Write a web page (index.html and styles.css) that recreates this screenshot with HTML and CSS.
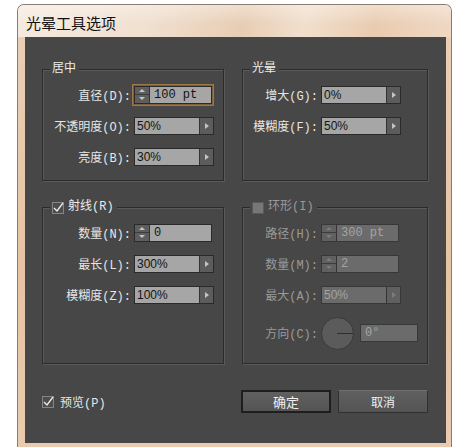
FILE: index.html
```html
<!DOCTYPE html>
<html>
  <head>
    <link rel="stylesheet" href="styles.css">
  </head>
  <body>
    <div class="window">
      <div class="titlebar">光晕工具选项</div>
      <div class="content">
        <div class="groups">
          <!-- 居中 -->
          <div class="group short">
            <div class="legend">居中</div>
            <div class="row">
              <span class="label">直径(D):</span>
              <div class="spinner focus">
                <span class="spin"><i class="up"></i><i class="down"></i></span>
                <span class="value mono">100 pt</span>
              </div>
            </div>
            <div class="row">
              <span class="label">不透明度(O):</span>
              <div class="field">
                <span class="value">50%</span>
                <span class="arrow"></span>
              </div>
            </div>
            <div class="row">
              <span class="label">亮度(B):</span>
              <div class="field">
                <span class="value">30%</span>
                <span class="arrow"></span>
              </div>
            </div>
          </div>

          <!-- 光晕 -->
          <div class="group short narrow">
            <div class="legend">光晕</div>
            <div class="row">
              <span class="label">增大(G):</span>
              <div class="field">
                <span class="value">0%</span>
                <span class="arrow"></span>
              </div>
            </div>
            <div class="row">
              <span class="label">模糊度(F):</span>
              <div class="field">
                <span class="value">50%</span>
                <span class="arrow"></span>
              </div>
            </div>
          </div>

          <!-- 射线 -->
          <div class="group tall">
            <div class="legend">
              <svg class="check" width="12" height="12" viewBox="0 0 12 12">
                <rect x="0.5" y="0.5" width="11" height="11" fill="#4d4d4d" stroke="#858585"/>
                <path d="M2 6 L5 9 L11 1" fill="none" stroke="#e8e8e8" stroke-width="1.4"/>
              </svg>
              射线(R)
            </div>
            <div class="row">
              <span class="label">数量(N):</span>
              <div class="spinner">
                <span class="spin"><i class="up"></i><i class="down"></i></span>
                <span class="value mono">0</span>
              </div>
            </div>
            <div class="row">
              <span class="label">最长(L):</span>
              <div class="field">
                <span class="value">300%</span>
                <span class="arrow"></span>
              </div>
            </div>
            <div class="row">
              <span class="label">模糊度(Z):</span>
              <div class="field">
                <span class="value">100%</span>
                <span class="arrow"></span>
              </div>
            </div>
          </div>

          <!-- 环形 (disabled) -->
          <div class="group tall narrow disabled">
            <div class="legend">
              <svg class="check" width="12" height="12" viewBox="0 0 12 12">
                <rect x="0.5" y="0.5" width="11" height="11" fill="#777" stroke="#595959"/>
              </svg>
              环形(I)
            </div>
            <div class="row">
              <span class="label">路径(H):</span>
              <div class="spinner">
                <span class="spin"><i class="up"></i><i class="down"></i></span>
                <span class="value mono">300 pt</span>
              </div>
            </div>
            <div class="row">
              <span class="label">数量(M):</span>
              <div class="spinner">
                <span class="spin"><i class="up"></i><i class="down"></i></span>
                <span class="value mono">2</span>
              </div>
            </div>
            <div class="row">
              <span class="label">最大(A):</span>
              <div class="field">
                <span class="value">50%</span>
                <span class="arrow"></span>
              </div>
            </div>
            <div class="row dial-row">
              <span class="label">方向(C):</span>
              <span class="dial"></span>
              <span class="angle mono">0°</span>
            </div>
          </div>
        </div>

        <div class="footer">
          <div class="preview">
            <svg class="check" width="12" height="12" viewBox="0 0 12 12">
              <rect x="0.5" y="0.5" width="11" height="11" fill="#4d4d4d" stroke="#858585"/>
              <path d="M2 6 L5 9 L11 1" fill="none" stroke="#e8e8e8" stroke-width="1.4"/>
            </svg>
            预览(P)
          </div>
          <div class="buttons">
            <div class="btn primary">确定</div>
            <div class="btn">取消</div>
          </div>
        </div>
      </div>
    </div>
  </body>
</html>
```

FILE: styles.css
```css
* {
  margin: 0;
  padding: 0;
  box-sizing: border-box;
}

body {
  background: #fff;
  font-family: "Liberation Mono", "Noto Sans CJK SC", monospace;
  font-size: 12px;
}

.window {
  margin: 4px 0 0 17px;
  width: 435px;
  height: 446px;
  border: 1px solid #8a7c70;
  border-bottom: none;
  border-radius: 7px 7px 0 0;
  background: linear-gradient(180deg, #ead0b8 0%, #e6c3a4 60%, #e9cbb0 100%);
  display: flex;
  flex-direction: column;
  overflow: hidden;
}

.titlebar {
  height: 32px;
  padding: 8px 0 0 8px;
  line-height: 20px;
  font-family: "Noto Sans CJK SC", sans-serif;
  font-size: 15px;
  color: #111;
  background:
    linear-gradient(180deg, rgba(255, 255, 255, 0.35), rgba(255, 255, 255, 0) 60%),
    linear-gradient(100deg, #f5eadf 0%, #f0e0d0 30%, #e8cdb4 52%, #f1dfcd 66%, #e9ccb0 82%, #efd8c4 100%);
}

.content {
  flex: 1;
  margin: 0 5px 7px 7px;
  background: #474747;
  padding: 32px 18px 0 17px;
}

.groups {
  display: grid;
  grid-template-columns: 182px 186px;
  column-gap: 18px;
  row-gap: 26px;
}

.group {
  position: relative;
  border: 1px solid #2b2b2b;
  box-shadow: inset 1px 1px 0 #5a5a5a, 1px 1px 0 #5a5a5a;
  padding-top: 9px;
}

.group.short {
  height: 112px;
}

.group.tall {
  height: 157px;
}

.legend {
  position: absolute;
  top: -9px;
  left: 7px;
  padding: 0 3px 0 2px;
  background: #474747;
  color: #ececec;
  line-height: 17px;
  display: flex;
  align-items: center;
  gap: 4px;
}

.row {
  display: flex;
  align-items: center;
  height: 31px;
}

.label {
  width: 91px;
  padding-right: 3px;
  text-align: right;
  color: #e6e6e6;
  white-space: nowrap;
}

.narrow .label {
  width: 78px;
}

/* text fields */

.field,
.spinner {
  display: flex;
  height: 18px;
  border: 1px solid #2a2a2a;
}

.field {
  width: 80px;
}

.spinner {
  width: 78px;
}

.spinner.focus {
  box-shadow: 0 0 0 1px #7f5f38, 0 0 0 2px #9c7747;
}

.value {
  flex: 1;
  background: #a6a6a6;
  color: #141414;
  padding-left: 2px;
  line-height: 16px;
  font-family: "Liberation Sans", sans-serif;
  font-size: 12px;
}

.value.mono,
.angle {
  font-family: "Liberation Mono", monospace;
  padding-left: 4px;
}

.arrow {
  width: 14px;
  background: #5c5c5c;
  border-left: 1px solid #333;
  display: flex;
  align-items: center;
  justify-content: center;
}

.arrow::after {
  content: "";
  border-left: 4px solid #c4c4c4;
  border-top: 3px solid transparent;
  border-bottom: 3px solid transparent;
}

.spin {
  width: 15px;
  background: #5e5e5e;
  border-right: 1px solid #333;
  display: flex;
  flex-direction: column;
}

.spin i {
  flex: 1;
  display: flex;
  align-items: center;
  justify-content: center;
}

.spin .up {
  border-bottom: 1px solid #3c3c3c;
}

.spin .up::after {
  content: "";
  border-bottom: 3px solid #c4c4c4;
  border-left: 3px solid transparent;
  border-right: 3px solid transparent;
}

.spin .down::after {
  content: "";
  border-top: 3px solid #c4c4c4;
  border-left: 3px solid transparent;
  border-right: 3px solid transparent;
}

/* disabled group */

.disabled .legend,
.disabled .label {
  color: #9a9a9a;
}

.disabled .value,
.disabled .angle {
  background: #6b6b6b;
  color: #a4a4a4;
}

.disabled .field,
.disabled .spinner {
  border-color: #383838;
}

.disabled .arrow,
.disabled .spin {
  background: #606060;
}

.disabled .arrow::after {
  border-left-color: #7c7c7c;
}

.disabled .spin .up::after {
  border-bottom-color: #7c7c7c;
}

.disabled .spin .down::after {
  border-top-color: #7c7c7c;
}

.dial-row {
  height: 38px;
  margin-top: 4px;
}

.dial {
  position: relative;
  width: 33px;
  height: 33px;
  border-radius: 50%;
  background: #5b5b5b;
  border: 1px solid #3a3a3a;
}

.dial::after {
  content: "";
  position: absolute;
  left: 15px;
  top: 15px;
  width: 16px;
  height: 1px;
  background: #2e2e2e;
}

.angle {
  margin-left: 6px;
  width: 58px;
  height: 18px;
  line-height: 16px;
  border: 1px solid #383838;
}

/* footer */

.footer {
  display: grid;
  grid-template-columns: 182px 187px;
  column-gap: 17px;
  align-items: center;
  margin-top: 26px;
}

.preview {
  display: flex;
  align-items: center;
  gap: 6px;
  color: #e6e6e6;
}

.buttons {
  display: flex;
  gap: 7px;
}

.btn {
  width: 90px;
  height: 23px;
  display: flex;
  align-items: center;
  justify-content: center;
  background: linear-gradient(180deg, #606060, #545454);
  border: 1px solid #303030;
  border-top-color: #6e6e6e;
  color: #f0f0f0;
  font-family: "Noto Sans CJK SC", sans-serif;
  font-size: 12px;
}

.btn.primary {
  border: 2px solid #1e1e1e;
  font-size: 13px;
}
```
